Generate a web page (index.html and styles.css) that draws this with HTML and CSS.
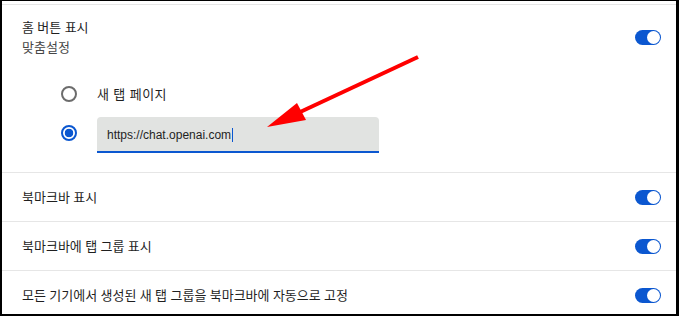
FILE: index.html
```html
<!DOCTYPE html>
<html lang="ko">
<head>
  <meta charset="UTF-8">
  <meta name="viewport" content="width=device-width, initial-scale=1.0">
  <title>모양 설정</title>
  <link rel="stylesheet" href="styles.css">
</head>
<body>

<div class="frame">
  <div class="card">

    <!-- 홈 버튼 -->
    <div class="home-section">
      <div class="row-head">
        <div class="labels">
          <div class="label">홈 버튼 표시</div>
          <div class="sublabel">맞춤설정</div>
        </div>
        <span class="toggle on"><span class="knob"></span></span>
      </div>

      <div class="radio-list">
        <div class="radio-option first">
          <span class="radio"></span>
          <span class="radio-text">새 탭 페이지</span>
        </div>
        <div class="radio-option">
          <span class="radio checked"></span>
          <div class="url-field">
            <span class="url-text">https://chat.openai.com</span><span class="caret"></span>
          </div>
        </div>
      </div>
    </div>

    <div class="row">
      <span class="label">북마크바 표시</span>
      <span class="toggle on"><span class="knob"></span></span>
    </div>
    <div class="row">
      <span class="label">북마크바에 탭 그룹 표시</span>
      <span class="toggle on"><span class="knob"></span></span>
    </div>
    <div class="row">
      <span class="label">모든 기기에서 생성된 새 탭 그룹을 북마크바에 자동으로 고정</span>
      <span class="toggle on"><span class="knob"></span></span>
    </div>
  </div>

  <!-- 빨간 화살표 -->
  <svg class="arrow" width="679" height="316" viewBox="0 0 679 316">
    <line x1="418" y1="57" x2="298" y2="113" stroke="#ff0000" stroke-width="4"/>
    <polygon points="267,127 297,103 306,120" fill="#ff0000"/>
  </svg>
</div>

</body>
</html>
```

FILE: styles.css
```css
* {
  box-sizing: border-box;
}

body {
  margin: 0;
  font-family: "Noto Sans", "Noto Sans CJK KR", sans-serif;
  font-size: 13px;
  color: #1f1f1f;
  background-color: #fff;
}

.frame {
  position: relative;
  width: 679px;
  height: 316px;
  border-style: solid;
  border-color: #000;
  border-width: 1px 3px 2px 2px;
  padding-top: 3px;
  background-color: #fff;
  overflow: hidden;
}

.card {
  border-top: 1px solid #e6e6e6;
}

.home-section {
  padding: 12px 15px 19px 20px;
}

.row-head {
  display: flex;
  align-items: center;
  justify-content: space-between;
  height: 40px;
}

.label {
  line-height: 20px;
}

.sublabel {
  line-height: 20px;
  color: #474747;
}

.radio-list {
  margin-top: 18px;
  padding-left: 39px;
}

.radio-option {
  display: flex;
  align-items: center;
  height: 36px;
}

.radio-option.first {
  height: 37px;
  margin-bottom: 5px;
}

.radio {
  width: 16px;
  height: 16px;
  border: 2px solid #6c6c6c;
  border-radius: 50%;
  margin-right: 20px;
  flex-shrink: 0;
}

.radio.checked {
  border-color: #0b57d0;
  margin-bottom: 4px;
  background: radial-gradient(circle, #0b57d0 0, #0b57d0 4px, transparent 4.6px);
}

.radio-text {
  color: #1f1f1f;
  letter-spacing: 0.5px;
}

.url-field {
  display: flex;
  align-items: center;
  width: 282px;
  height: 36px;
  padding: 2px 10px 0 10px;
  background-color: #e1e3e1;
  border-radius: 4px 4px 0 0;
  border-bottom: 2px solid #0b57d0;
}

.url-text {
  font-family: "Liberation Sans", Arial, sans-serif;
  font-size: 12px;
  color: #1f1f1f;
}

.caret {
  display: inline-block;
  width: 1px;
  height: 14px;
  background-color: #0b57d0;
  margin-left: 1px;
}

.row {
  display: flex;
  align-items: center;
  justify-content: space-between;
  height: 49px;
  padding: 0 15px 0 20px;
  border-top: 1px solid #e6e6e6;
}

.toggle {
  position: relative;
  width: 26px;
  height: 15px;
  border-radius: 8px;
  background-color: #0b57d0;
  flex-shrink: 0;
}

.toggle .knob {
  position: absolute;
  top: 1px;
  right: 1px;
  width: 13px;
  height: 13px;
  border-radius: 50%;
  background-color: #fff;
}

.arrow {
  position: absolute;
  left: -2px;
  top: -1px;
  pointer-events: none;
}
```
